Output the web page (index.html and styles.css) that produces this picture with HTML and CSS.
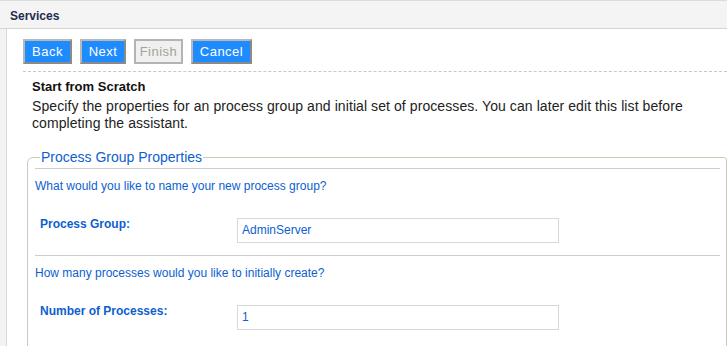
FILE: index.html
```html
<!DOCTYPE html>
<html>
<head>
<meta charset="utf-8">
<link rel="stylesheet" href="styles.css">
</head>
<body>
<div class="header">Services</div>
<div class="main">
  <div class="toolbar">
    <button class="btn">Back</button>
    <button class="btn">Next</button>
    <button class="btn disabled">Finish</button>
    <button class="btn">Cancel</button>
  </div>
  <div class="content">
    <h2 class="title">Start from Scratch</h2>
    <p class="intro">Specify the properties for an process group and initial set of processes. You can later edit this list before completing the assistant.</p>
    <fieldset class="group">
      <legend class="legend">Process Group Properties</legend>
      <div class="section">
        <div class="question">What would you like to name your new process group?</div>
        <div class="row">
          <label class="label">Process Group:</label>
          <div class="input">AdminServer</div>
        </div>
      </div>
      <div class="section">
        <div class="question">How many processes would you like to initially create?</div>
        <div class="row">
          <label class="label">Number of Processes:</label>
          <div class="input">1</div>
        </div>
      </div>
    </fieldset>
  </div>
</div>
</body>
</html>
```
FILE: styles.css
```css
html, body {
  margin: 0;
  padding: 0;
}
body {
  background: #f3f3f3;
  font-family: "Liberation Sans", Arial, sans-serif;
  width: 727px;
  height: 346px;
  overflow: hidden;
}
.header {
  height: 27px;
  border-top: 1px solid #dcdcdc;
  border-bottom: 1px solid #d4d4d4;
  background: #f4f4f4;
  padding-left: 10px;
  font-size: 12px;
  font-weight: bold;
  color: #1e2d4f;
  line-height: 31px;
  box-sizing: content-box;
}
.main {
  margin-left: 6px;
  border-left: 1px solid #dadada;
  background: #fff;
  height: 317px;
  overflow: hidden;
}
.toolbar {
  display: flex;
  gap: 8px;
  margin-left: 16px;
  padding-top: 10px;
  padding-bottom: 7px;
  border-bottom: 1px dashed #c8c8c8;
}
.btn {
  height: 25px;
  padding: 0;
  background: #1e8cff;
  color: #fff;
  font-family: "Liberation Sans", Arial, sans-serif;
  font-size: 13px;
  border: 2px solid;
  border-color: #b8b8b8 #8a8a8a #8a8a8a #b8b8b8;
  margin: 0;
  letter-spacing: 0.5px;
}
.btn:nth-child(1) { width: 49px; }
.btn:nth-child(2) { width: 46px; }
.btn:nth-child(3) { width: 49px; }
.btn:nth-child(4) { width: 61px; }
.btn.disabled {
  background: #f0f0f0;
  color: #a3a396;
  border: 2px solid #b4b4b4;
}
.content {
  padding: 0 0 0 20px;
}
.title {
  margin: 7px 0 0 5px;
  font-size: 13px;
  font-weight: bold;
  color: #111;
  line-height: 16px;
}
.intro {
  margin: 3px 0 0 5px;
  font-size: 14px;
  line-height: 17px;
  color: #222;
  width: 680px;
  letter-spacing: 0.08px;
}
.group {
  margin: 17px 0 0 0;
  border: 1px solid #cbcbb9;
  border-radius: 6px 3px 0 0;
  padding: 0 6px 40px 7px;
  min-width: 0;
}
.legend {
  font-size: 14px;
  color: #0d5fcf;
  padding: 0 1px;
  margin-left: 5px;
  line-height: 16px;
}
.section {
  border-top: 1px solid #cdcdcd;
  margin-top: 3px;
}
.section + .section {
  margin-top: 12px;
}
.question {
  font-size: 12px;
  color: #0d5fcf;
  margin-top: 9px;
  line-height: 16px;
}
.row {
  display: flex;
  align-items: flex-start;
  margin-top: 22px;
}
.label {
  width: 197px;
  padding-left: 5px;
  font-size: 12px;
  font-weight: bold;
  color: #0d5fcf;
  line-height: 16px;
}
.input {
  width: 316px;
  height: 23px;
  border: 1px solid #d8d8d8;
  font-size: 12px;
  color: #0d5fcf;
  line-height: 23px;
  padding-left: 4px;
  margin-top: 2px;
}
```
